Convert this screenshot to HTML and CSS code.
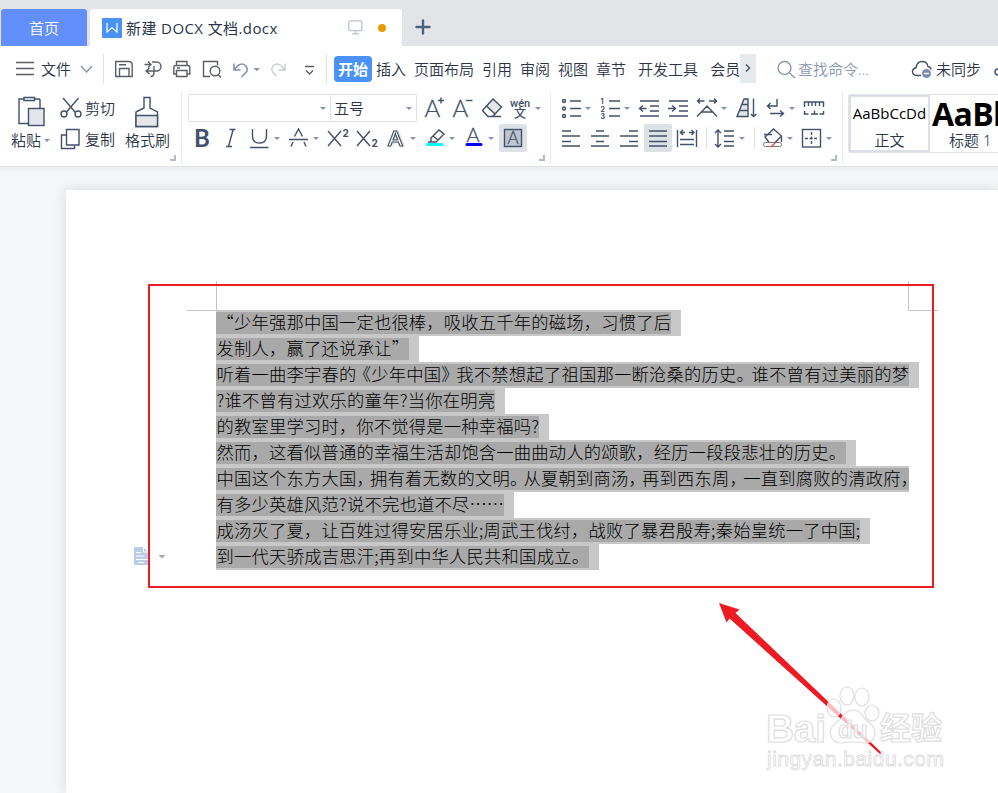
FILE: index.html
```
<!DOCTYPE html>
<html lang="zh-CN">

<head>
    <meta charset="UTF-8">
    <meta name="viewport" content="width=device-width, initial-scale=1.0">
    <title>新建 DOCX 文档.docx</title>
    <link rel="stylesheet" href="styles.css">
</head>

<body>
    <!-- 标签栏 -->
    <div class="tabbar">
        <div class="tab home">首页</div>
        <div class="tab doc">
            <svg class="logo" width="20" height="20" viewBox="0 0 20 20"><rect width="20" height="20" rx="1" fill="#4a93f3"/><path d="M5 5v9l5-4.200 5 4.200V5" fill="none" stroke="#fff" stroke-width="1.200"/></svg>
            <span class="title">新建 DOCX 文档.docx</span>
            <svg class="screen" width="15" height="15" viewBox="0 0 15 15" fill="none" stroke="#bcc3d8" stroke-width="1.3"><rect x=".8" y=".8" width="13" height="9.8" rx="1"/><path d="M7.5 10.6v3M4 13.9h7"/></svg>
            <i class="dot"></i>
        </div>
        <svg class="plus" width="16" height="16" viewBox="0 0 16 16"><path d="M8 1.500v13M1.500 8h13" stroke="#505f80" stroke-width="2.400" stroke-linecap="round"/></svg>
    </div>

    <!-- 菜单栏 -->
    <div class="menubar">
        <svg width="41" height="45" viewBox="0 46 41 45"><path d="M16 62.5h18M16 68.5h18M16 74.5h18" class="g"/></svg>
        <span class="file">文件</span>
        <svg width="263" height="45" viewBox="71 46 263 45">
            <path d="M81 66l5.5 6 5.5-6" class="g lt"/>
            <path d="M103.5 54v30M326.500 54v30" stroke="#dfe2e8"/>
            <!-- 保存 -->
            <path d="M115.700 61.500h13q3.500 0 3.500 3.500v11.500h-16.500zM119.500 76v-7.500h9.500v7.500M119 64.800h7" class="g"/>
            <!-- 输出 -->
            <path d="M144.500 64.500h6M148 61.500l3 3-3 3M152 62h4.500a4.500 4.500 0 0 1 0 9h-10M149.500 68l-3.500 3 3.500 3M154 66v6.500q0 4-3.500 4" class="g"/>
            <!-- 打印 -->
            <path d="M176.500 65v-3.500h10.500v3.500M176.500 74h-2.700v-6.500q0-2 2-2h12q2 0 2 2v6.500h-2.800M176.500 70.500h10.500v6h-10.500zM177 68h3" class="g"/>
            <!-- 预览 -->
            <path d="M210 76.500h-6.500v-15h14v4M218.500 75l2.500 2.500" class="g"/><circle cx="215" cy="71" r="4.800" class="g"/>
            <path d="M234 63.500v6.500h6.500M234.500 69.500l3.500-4q4-3 7.500 0 3.500 4 0 7.500l-4 4" class="g undo"/>
            <path d="M253.500 68h6.500l-3.200 3.200z" fill="#8592b5"/>
            <path d="M285 63.500v6.500h-6.500M284.500 69.500l-3.500-4q-4-3-7.500 0-3.500 4 0 7.500l3 3" class="g redo"/>
            <path d="M305 66.500h9M306 70.500l3.500 3.500 3.500-3.500" class="g"/>
        </svg>
        <nav class="menu">
            <a class="on">开始</a><a>插入</a><a>页面布局</a><a>引用</a><a>审阅</a><a>视图</a><a>章节</a><a class="gap">开发工具</a><a class="gap">会员</a>
        </nav>
        <div class="more"><svg width="16" height="29" viewBox="0 0 16 29"><path d="M6 10.500l3.500 3.500-3.500 3.500" class="d"/></svg></div>
        <div class="search">
            <svg width="19" height="20" viewBox="777 59 19 20"><circle cx="784.500" cy="68" r="6.500" class="g mist"/><path d="M789.500 73l5.500 5" class="g mist"/></svg>
            <span>查找命令...</span>
        </div>
        <div class="sync">
            <svg width="22" height="20" viewBox="911 59 22 20"><path d="M921 75.500h-4.500q-4-.5-4-4 0-3.200 3.700-3.800.5-6.200 6-6.200 5 0 5.700 5 3 .500 3 3" class="d"/><circle cx="926.500" cy="73.500" r="4.500" fill="#7f8cac"/><path d="M924 73.500h5" stroke="#fff" stroke-width="1.300"/></svg>
            <span>未同步</span>
            <svg width="4" height="14" viewBox="0 0 4 14"><circle cx="4" cy="10" r="3" class="d"/></svg>
        </div>
    </div>

    <!-- 功能区 -->
    <div class="ribbon">
        <section class="clip">
            <div class="big paste">
                <svg width="30" height="32" viewBox="17 96 30 32" class="d"><path d="M24 99h-5v24.500h9M40 99v9"/><path d="M24 97.500h10.500v3H24zM34.500 99h5.500"/><rect x="28.500" y="108.500" width="15.500" height="17" fill="#e4e6ec"/></svg>
                <span>粘贴<i class="caret"></i></span>
            </div>
            <div class="pair">
                <div><svg width="24" height="28" viewBox="60 94 24 28" class="d"><path d="M63 98l12 14M78.500 98l-12 14"/><circle cx="64" cy="114" r="3"/><circle cx="78" cy="114" r="3"/></svg>剪切</div>
                <div><svg width="24" height="28" viewBox="60 125 24 28" class="d"><path d="M66.500 135h-5v13.500h13v-3"/><path d="M66.500 129.500h12.500v15.500H66.500z" fill="#fff"/></svg>复制</div>
            </div>
            <div class="big brush">
                <svg width="26" height="32" viewBox="134 96 26 32" class="d"><path d="M144 97.500h6v10.500l7.500 4v14.500h-21.500V112l8-4z"/><path d="M136 115.500h21.500v11H136z" fill="#e4e6ec"/></svg>
                <span>格式刷</span>
            </div>
            <i class="corner"></i>
        </section>

        <section class="font">
            <div class="row">
                <div class="combo name"><i class="caret"></i></div>
                <div class="combo size">五号<i class="caret"></i></div>
                <svg width="133" height="28" viewBox="417 94 133 28">
                    <text x="424.500" y="117" class="la">A</text><path d="M438 100.500h6M441 97.500v6" class="d"/>
                    <text x="452.500" y="117" class="la">A</text><path d="M466 100.500h6.500" class="d"/>
                    <path d="M486.500 106l6.500-7 8.500 8-6.500 7z" class="d soft"/><path d="M486.500 106l-4 4.500 5.500 6h4.500l2.500-2.500M488 116.500h13" class="d"/>
                    <text x="510" y="107" class="py">wén</text><text x="514" y="118" class="wen">文</text>
                    <path d="M535 107h6l-3 3z" class="ct"/>
                </svg>
            </div>
            <div class="row">
                <svg width="311" height="28" viewBox="188 124 311 28">
                    <text x="194" y="147" class="bold">B</text>
                    <path d="M229.500 129.500h6M226 146.500h6M233 130l-4.500 16.500" class="d"/>
                    <path d="M252.500 129v7q0 7 7 7t7-7v-7M250 147.500h18.500" class="d"/><path d="M274 137h6l-3 3z" class="ct"/>
                    <path d="M294.500 136.500l4-7.500 4 7.500M289 139.500h19M293 142l-2 4.500M304 142l2 4.500" class="d"/><path d="M313 137h6l-3 3z" class="ct"/>
                    <path d="M328 131l13 15M341 131l-13 15" class="d"/><text x="342.500" y="137" class="sub">2</text>
                    <path d="M357 131l13 15M370 131l-13 15" class="d"/><text x="371.500" y="147" class="sub">2</text>
                    <text x="388" y="145.500" class="out">A</text><path d="M410 137h6l-3 3z" class="ct"/>
                    <path d="M431 142v-4l8-8 5 4-8 8zM433 136l5 4M428 142h3" class="d"/><path d="M427.500 144.500h14.500" stroke="#0ff" stroke-width="3" stroke-linecap="round"/><path d="M449 137h6l-3 3z" class="ct"/>
                    <text x="466.500" y="142" class="la c">A</text><path d="M467 144.500h14" stroke="#00f" stroke-width="3" stroke-linecap="round"/><path d="M488 137h6l-3 3z" class="ct"/>
                </svg>
                <div class="pressed"><svg width="28" height="28" viewBox="0 0 28 28"><rect x="5.500" y="5.500" width="17" height="17" class="d dim"/><text x="8.500" y="20" class="la b">A</text></svg></div>
            </div>
            <i class="corner"></i>
        </section>

        <section class="para">
            <div class="row">
                <svg width="291" height="28" viewBox="551 94 291 28">
                    <g class="d"><circle cx="564" cy="101" r="1.500"/><circle cx="564" cy="108.500" r="1.500"/><circle cx="564" cy="116" r="1.500"/></g>
                    <path d="M570 101h11M570 108.500h11M570 116h11" class="d"/><path d="M585 107h6l-3 3z" class="ct"/>
                    <text x="600.500" y="103.500" class="num">1</text><text x="600.500" y="111.500" class="num">2</text><text x="600.500" y="119" class="num">3</text>
                    <path d="M609 101h11M609 108.500h11M609 116h11" class="d"/><path d="M624 107h6l-3 3z" class="ct"/>
                    <path d="M640 101h19M650 106h9M650 111h9M640 116h19M639.500 108.500h7M643 105.500l-3.500 3 3.500 3" class="d"/>
                    <path d="M669 101h19M679 106h9M679 111h9M669 116h19M668 108.500h7M672 105.500l3.500 3-3.500 3" class="d"/>
                    <path d="M697.500 101h7M700 98.500l-2.500 2.500 2.500 2.500M709 101h7.500M714 98.500l2.500 2.500-2.500 2.500M697 116.500l10-10.500 10 10.500M702 112h10" class="d"/><path d="M721 107h6l-3 3z" class="ct"/>
                    <path d="M748 99v17.500h-11l7-17.500zM742 104.500h6M740 110.500h8" class="d soft"/><path d="M753.500 98.500v18M751 114l2.500 2.500 3-2.500" class="d"/>
                    <path d="M777 99v7h-9.500M770.500 103l-3 3 3 3M770 113.500h13M780 110.500l3.500 3-3.500 3" class="d"/><path d="M789 107h6l-3 3z" class="ct"/>
                    <path d="M804.500 107v-5h19v5M808.500 102v4M812 102v4M815.500 102v4M819.500 102v4M804.500 111v3h4M819.500 114h4v-3M811 114h7M814.500 110.500v3.500" class="d"/>
                </svg>
            </div>
            <div class="row">
                <svg width="93" height="28" viewBox="551 124 93 28">
                    <path d="M562 131h9M562 136h18M562 141.500h9M562 146h18M596 131h8M591 136h18M596 141.500h8M591 146h18M629 131h9M620 136h18M629 141.500h9M620 146h18" class="d"/>
                </svg>
                <div class="pressed"><svg width="28" height="28" viewBox="0 0 28 28"><path d="M5 7h18M5 12h18M5 17.500h18M5 22h18" class="d"/></svg></div>
                <svg width="170" height="28" viewBox="672 124 170 28">
                    <path d="M677.500 130v17M696.500 130v17M680 132.500h5M683 130l-2.500 2.500 2.500 2.500M689 132.500h5M691.500 130l2.500 2.500-2.500 2.500M680 139.500h14M680 144.500h14" class="d"/>
                    <path d="M706.500 127v22M754.500 127v22" stroke="#dfe2e8"/>
                    <path d="M718 130v17M715 133l3-3 3 3M715 144l3 3 3-3M724 131h10M724 136h10M724 141.500h10M724 146h10" class="d"/><path d="M739 137h6l-3 3z" class="ct"/>
                    <path d="M765 137l8.500-8 8 7-7 7h-5zM764 134.500h8M781.500 136v6" class="d"/><rect x="763.500" y="142.500" width="18" height="4" rx="2" fill="#fff" stroke="#777"/><path d="M771 147l5-5" stroke="#f33" stroke-width="1.300"/><path d="M787 137h6l-3 3z" class="ct"/>
                    <rect x="802.500" y="129.500" width="18" height="17.500" class="d"/><path d="M811.500 132v13M805 138.500h13" stroke-dasharray="3 1.500" class="d"/><path d="M826 137h6l-3 3z" class="ct"/>
                </svg>
            </div>
            <i class="corner"></i>
        </section>

        <section class="gallery">
            <div class="style sel"><b>AaBbCcDd</b><span>正文</span></div>
            <div class="style h1"><b>AaBb</b><span>标题 1</span></div>
        </section>
    </div>

    <!-- 编辑区 -->
    <main class="work">
        <div class="page">
            <div class="text">
                <p><span style="width:455px">“少年强那中国一定也很棒，吸收五千年的磁场，习惯了后</span></p>
                <p><span style="width:193px">发制人，赢了还说承让”</span></p>
                <p><span style="width:693px">听着一曲李宇春的<i class="l">《</i>少年中国<i class="t">》</i>我不禁想起了祖国那一断沧桑的历史<i class="t">。</i>谁不曾有过美丽的梦</span></p>
                <p><span style="width:279px">?谁不曾有过欢乐的童年?当你在明亮</span></p>
                <p><span style="width:323px">的教室里学习时，你不觉得是一种幸福吗?</span></p>
                <p><span style="width:630px">然而，这看似普通的幸福生活却饱含一曲曲动人的颂歌，经历一段段悲壮的历史。</span></p>
                <p class="full"><span style="width:693px">中国这个东方大国<i class="m">，</i>拥有着无数的文明<i class="m">。</i>从夏朝到商汤<i class="m">，</i>再到西东周<i class="m">，</i>一直到腐败的清政府<i class="e">，</i></span></p>
                <p><span style="width:288px">有多少英雄风范?说不完也道不尽……</span></p>
                <p><span style="width:644px">成汤灭了夏，让百姓过得安居乐业;周武王伐纣，战败了暴君殷寿;秦始皇统一了中国;</span></p>
                <p><span style="width:373px">到一代天骄成吉思汗;再到中华人民共和国成立。</span></p>
            </div>
        </div>
        <!-- 标注 -->
        <svg class="marks" width="998" height="626" viewBox="0 167 998 626">
            <path d="M216.500 281v29M187 310.500h29.500M908.500 281v29.500H938" fill="none" stroke="#c4c4c4"/>
            <path d="M134 547h9l5 5v13h-14z" fill="#b9cce9"/><path d="M136 552.500h5M136 556h8M136 559.500h12M138 562.500h6M143.500 547v5h5" stroke="#fff" fill="none"/>
            <path d="M158.500 555h7l-3.500 3.500z" fill="#a8a8a8"/>
            <rect x="149" y="285" width="784" height="302" fill="none" stroke="#ed1c24" stroke-width="2"/>
            <path d="M719 603l20.500 6.500-4 3.500L882 753l-1.500 1.500L729.500 618.500l-3 4z" fill="#ed1c24"/>
            <g class="wm">
                <ellipse cx="834" cy="708" rx="7" ry="9"/><ellipse cx="847" cy="696" rx="7" ry="9"/><ellipse cx="862" cy="697" rx="7" ry="9"/><ellipse cx="872" cy="713" rx="7" ry="8"/>
                <path d="M853 710q7 0 12 9 9 6 10 13 0 11-11 11-11-2-22 0-11 0-12-11 1-7 11-13 5-9 12-9z"/>
                <text x="766" y="742" class="bd" textLength="60">Bai</text>
                <text x="838" y="738" class="du">du</text>
                <text x="880" y="739" class="jy">经验</text>
                <text x="767" y="766" class="url" textLength="177">jingyan.baidu.com</text>
            </g>
        </svg>
    </main>
</body>

</html>
```
FILE: styles.css
```
* {
    margin: 0;
    box-sizing: border-box;
}

body {
    width: 998px;
    height: 793px;
    overflow: hidden;
    background: #f5f6f8;
    color: #2b3549;
    font: 350 15px/22px "Noto Sans", "Noto Sans CJK SC", sans-serif;
}

svg {
    flex: none;
    display: block;
}

/* 图标线条 */
.g,
.d {
    fill: none;
    stroke: #5b5e66;
    stroke-width: 1.4;
}

.d {
    stroke: #435069;
}

.soft {
    fill: #e4e6ec;
}

.dim {
    fill: #bfc4ce;
}

.g.lt {
    stroke: #8d93a0;
}

.g.undo {
    stroke: #8592b5;
    stroke-width: 1.6;
}

.g.redo {
    stroke: #c8cbd2;
}

.g.mist {
    stroke: #8a97b5;
}

.ct {
    fill: #8592b5;
}

/* 标签栏 */
.tabbar {
    display: flex;
    align-items: flex-end;
    height: 46px;
    padding-left: 1px;
    background: #e2e4e8;
}

.tab {
    display: flex;
    align-items: center;
    height: 37px;
    border-radius: 3px 3px 0 0;
}

.home {
    justify-content: center;
    width: 86px;
    margin-right: 3px;
    background: #628ffb;
    color: #fff;
}

.doc {
    width: 312px;
    padding-left: 12px;
    background: #fff;
}

.title {
    width: 222px;
    margin-left: 4px;
    font-family: "Open Sans", "Noto Sans CJK SC", sans-serif;
    font-weight: 400;
    letter-spacing: .4px;
    white-space: nowrap;
}

.dot {
    width: 8px;
    height: 8px;
    margin-left: 15px;
    border-radius: 50%;
    background: #e89a06;
}

.plus {
    margin: 0 0 11px 13px;
}

/* 菜单栏 */
.menubar {
    display: flex;
    align-items: center;
    height: 45px;
    background: #fff;
    white-space: nowrap;
}

.file {
    width: 30px;
}

.menu {
    display: flex;
    align-items: center;
    gap: 8px;
    width: 406px;
}

.menu .on {
    height: 26px;
    margin-right: -4px;
    padding: 0 4px;
    border-radius: 4px;
    background: #4a92f5;
    color: #fff;
    font-weight: bold;
    line-height: 26px;
}

.menu .gap {
    margin-left: 4px;
}

.more {
    position: relative;
    height: 29px;
    background: #e6e9ed;
}

.search {
    display: flex;
    align-items: center;
    gap: 2px;
    width: 135px;
    margin-left: 21px;
    color: #8a97b5;
}

.sync {
    display: flex;
    align-items: center;
    margin-left: 1px;
}

.sync span {
    margin: 0 13px 0 3px;
}

/* 功能区 */
.ribbon {
    display: flex;
    height: 76px;
    padding-top: 1px;
    background: #fff;
    border-bottom: 1px solid #dfe3e8;
    white-space: nowrap;
}

.ribbon section {
    position: relative;
    flex: none;
    height: 72px;
    padding-top: 2px;
    border-right: 1px solid #e9ebef;
}

.ribbon .clip {
    display: flex;
    width: 182px;
    padding-left: 11px;
}

.big svg {
    margin: 2px 0 1px 6px;
}

.big span {
    display: flex;
    align-items: center;
}

.paste {
    width: 49px;
}

.pair {
    width: 65px;
}

.pair div {
    display: flex;
    align-items: center;
    height: 28px;
    margin-bottom: 3px;
}

.pair svg {
    margin-right: 1px;
}

.brush svg {
    margin-left: 9px;
}

.caret {
    border: 3px solid transparent;
    border-top-color: #8592b5;
    border-bottom: 0;
}

.paste .caret {
    margin-left: 3px;
}

.corner {
    position: absolute;
    right: 5px;
    bottom: 3px;
    width: 6px;
    height: 6px;
    border: solid #b1bacd;
    border-width: 0 2px 2px 0;
}

.ribbon .font {
    width: 369px;
    padding-left: 6px;
}

.row {
    display: flex;
    height: 28px;
    margin-bottom: 2px;
}

.combo {
    display: flex;
    align-items: center;
    justify-content: space-between;
    height: 28px;
    padding: 0 4px 0 3px;
    border: 1px solid #dfe2e8;
}

.name {
    width: 143px;
    border-radius: 2px 0 0 2px;
    justify-content: flex-end;
}

.size {
    width: 86px;
    border-left: 0;
    border-radius: 0 2px 2px 0;
}

.pressed {
    border-radius: 2px;
    background: #dde2e7;
}

.ribbon .para {
    width: 292px;
}

.la {
    fill: #435069;
    stroke: #435069;
    stroke-width: .3;
    font: 300 24px Lato, sans-serif;
}

.la.c {
    font-size: 20px;
}

.la.b {
    font-size: 17px;
}

.bold {
    fill: #435069;
    font: bold 24px Lato, sans-serif;
}

.sub {
    fill: #435069;
    font: bold 10px Inter, sans-serif;
}

.num {
    fill: #435069;
    font: bold 7px Inter, sans-serif;
}

.out {
    fill: #fff;
    stroke: #435069;
    stroke-width: 1.1;
    font: bold 21px Lato, sans-serif;
    filter: drop-shadow(1px 0 1px #ccc);
}

.py {
    fill: #435069;
    font: 500 11px Roboto, sans-serif;
}

.wen {
    fill: #435069;
    font: 500 12px "Noto Sans CJK SC", sans-serif;
}

/* 样式库 */
.ribbon .gallery {
    display: flex;
    width: 150px;
    height: 59px;
    margin: 2px 0 0 5px;
    padding: 0;
    border: 1px solid #e0e3e9;
    border-right: 0;
    border-radius: 3px 0 0 3px;
}

.style {
    display: flex;
    flex: none;
    flex-direction: column;
    align-items: center;
    width: 81px;
    height: 57px;
    line-height: 20px;
}

.style b {
    height: 34px;
    color: #000;
    font: 15px/32px "Open Sans", sans-serif;
}

.sel {
    border: 2px solid #dcdfe6;
}

.sel b {
    height: 33px;
}

.h1 {
    align-items: flex-start;
    width: 68px;
    padding-left: 2px;
    overflow: hidden;
}

.h1 b {
    height: 35px;
    font: bold 32px/38px "Open Sans", sans-serif;
    letter-spacing: -.6px;
}

.h1 span {
    padding-left: 17px;
}

/* 编辑区 */
.work {
    position: relative;
    height: 626px;
    padding: 23px 0 0 66px;
    background: linear-gradient(#eceef0, #f5f6f8 6px);
}

.page {
    width: 932px;
    height: 603px;
    padding: 120px 0 0 150px;
    background: #fff;
    box-shadow: 0 0 12px #d6d8dc;
}

.text p {
    width: fit-content;
    height: 26px;
    padding: 2px 10px 2px 0;
    background: #c8c8c8;
}

.text .full {
    padding-right: 0;
}

.text span {
    display: block;
    height: 22px;
    padding-left: .5px;
    background: #a9a9a9;
    color: #000;
    font: 300 17.3px/20px "Noto Sans CJK SC", sans-serif;
    text-align: justify;
    text-align-last: justify;
    white-space: nowrap;
}

/* 标点压缩 */
.text i {
    font-style: normal;
}

.l {
    margin-left: -3px;
}

.t {
    margin-right: -2.5px;
}

.m {
    margin-right: -4px;
}

.e {
    margin-right: -9px;
}

.marks {
    position: absolute;
    left: 0;
    top: 0;
}

.wm {
    fill: #fff;
    fill-opacity: .7;
    stroke: #dedede;
    stroke-width: 1.2;
}

.bd {
    font: bold 39px "Liberation Sans", sans-serif;
}

.du {
    font: bold 24px "Liberation Sans", sans-serif;
}

.jy {
    font: bold 31px "Noto Sans CJK SC", sans-serif;
}

.url {
    font: 21px "Liberation Sans", sans-serif;
    stroke-width: .9;
}
```
